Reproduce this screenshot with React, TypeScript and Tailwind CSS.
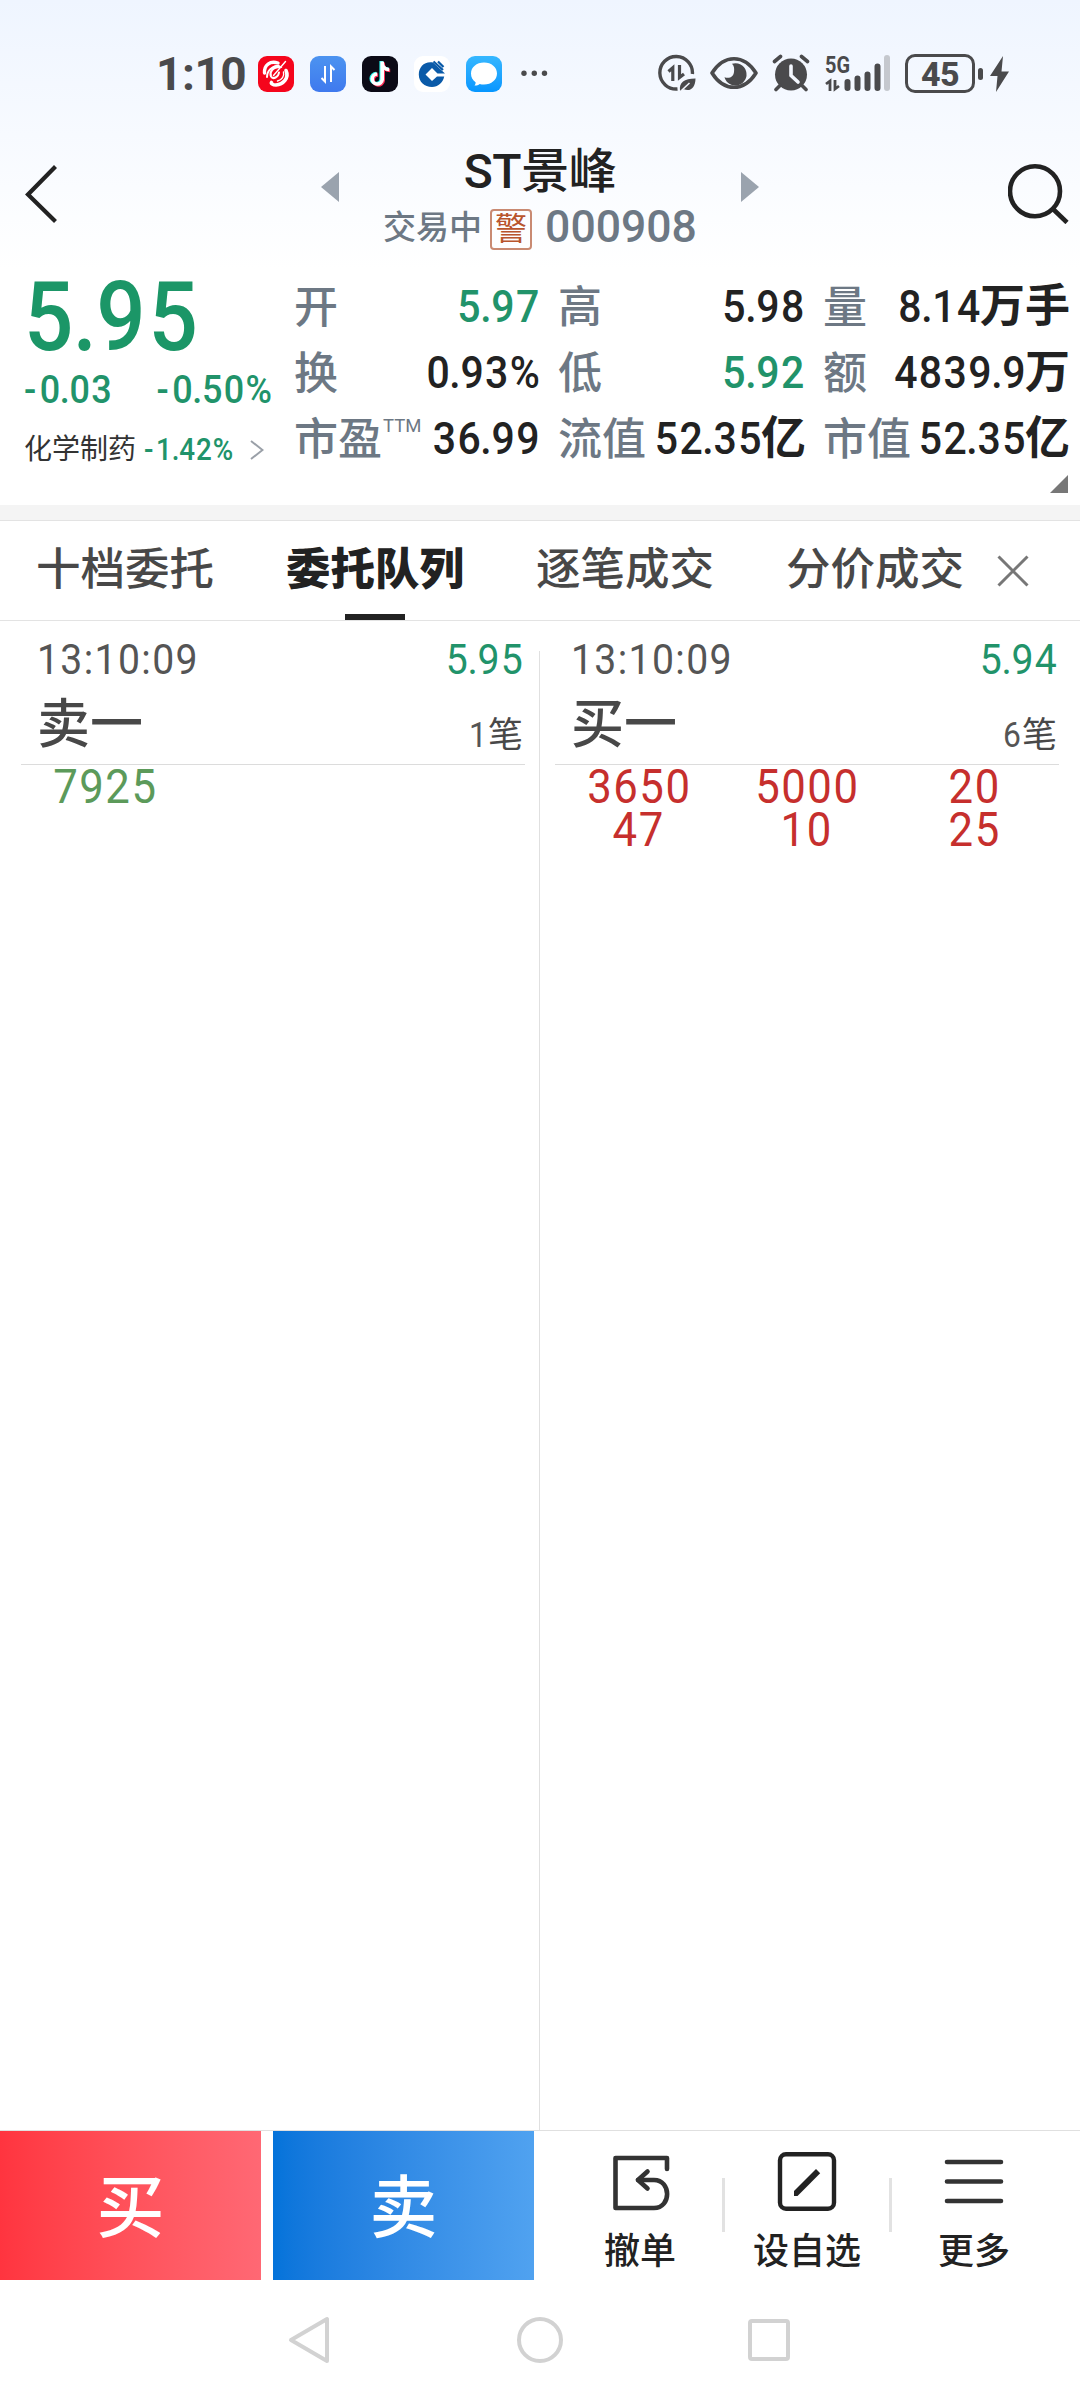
import { FC, ReactNode } from 'react';
import clsx from 'clsx';

type NumProps = { value: string; unit?: string; align?: 'left' | 'center' | 'right'; className?: string };

const ORIGINS = { left: 'origin-left', center: 'origin-center', right: 'origin-right' };

// narrow digits, the unit after them (万, 亿...) is heavier
const Num: FC<NumProps> = ({ value, unit, align = 'right', className }) => {
  const minus = value.startsWith('-');
  const [whole, decimals] = (minus ? value.slice(1) : value).split('.');
  return (
    <span className={clsx('flex whitespace-nowrap', className)}>
      <span className={clsx('inline-block scale-x-[0.91] tracking-[0.035em]', ORIGINS[align])}>
        {minus && <span className="mr-[0.06em]">-</span>}
        {whole}
        {decimals && (
          <>
            <span className="-mx-[0.043em]">.</span>
            {decimals}
          </>
        )}
      </span>
      {unit && <span className="-ml-0.5 font-bold">{unit}</span>}
    </span>
  );
};

const AppIcon: FC<{ className: string; children: ReactNode }> = ({ className, children }) => (
  <svg viewBox="0 0 36 36" className={clsx('size-9 rounded-[9px]', className)}>
    {children}
  </svg>
);

const StatusBar: FC = () => (
  <div className="flex h-[148px] items-start pt-[54px] pl-[156px] text-[#4a4a4c]">
    <div className="h-[38px] w-[102px] text-[46px] leading-[40px] font-bold tracking-[-0.01em]">1:10</div>
    <div className="mt-[2px] flex gap-4">
      <AppIcon className="bg-[#f5051c]">
        <g fill="none" stroke="#fff" strokeLinecap="round">
          <path d="M20 7C12 4.500 6 9 6.500 17" strokeWidth="3.400" />
          <path d="M9 21C9 12 19 8 22 11C15 11 11 16 13 20.500C15 24 20.500 21 21 16.500" strokeWidth="2" />
          <path d="M27.500 5.500L15.500 19.500" strokeWidth="1.400" />
          <path d="M28 14.500C31.500 22 25 28.500 18 29C14.500 29 13 27.500 13.500 26.500" strokeWidth="3.600" />
          <path d="M19.500 25C24 24 26.500 20 25.500 16" strokeWidth="1.400" />
        </g>
      </AppIcon>
      <AppIcon className="bg-linear-to-b from-[#4c93f0] to-[#3f79ee]">
        <path d="M15 10v15.500l-3.500-3.500M21 26V10.500l3.500 3.500" fill="none" stroke="#fff" strokeWidth="2" />
      </AppIcon>
      <AppIcon className="bg-[#0b0a16]">
        <g fill="none" strokeWidth="3.600">
          <path d="M19.200 5v18a5 5 0 1 1-5-5.500M19.200 7c.5 4 3.500 6 7 6" stroke="#25f4ee" />
          <path d="M21.200 6.500v18a5 5 0 1 1-5-5.500M21.200 8.500c.5 4 3.500 6 7 6" stroke="#fe2c55" />
          <path d="M20.200 5.500v18a5 5 0 1 1-5-5.500M20.200 7.500c.5 4 3.500 6 7 6" stroke="#fff" />
        </g>
      </AppIcon>
      <AppIcon className="bg-white">
        <path
          d="M19 6.500C10.500 5 4.800 11 4.800 18.500S10.500 31 18 31c6 0 11-4.500 12.200-10.500H23L18 25l-6.500-6.500L18 12l5.500 5.500H31L19 6.500z"
          fill="#0a5aa8"
        />
        <path d="M19.500 5.500l9.500 8.500M24 5.500l5.500 5.500" stroke="#0a5aa8" strokeWidth="2.200" />
      </AppIcon>
      <AppIcon className="bg-linear-to-b from-[#35b7ff] to-[#0596ff]">
        <path d="M18 6.500c7.500 0 13 4.700 13 11s-5.500 11-13 11c-1.500 0-3-.2-4.300-.6-1.500 1.200-3.400 1.800-5.200 1.600.8-.9 1.200-2 1.100-3.300C6.600 24.200 5 21.200 5 17.500c0-6.300 5.500-11 13-11z" fill="#fff" />
      </AppIcon>
    </div>
    <svg viewBox="0 0 28 38" className="ml-[19px] h-[38px] w-[28px] fill-current">
      <circle cx="3" cy="19.300" r="2.700" />
      <circle cx="13.300" cy="19.300" r="2.700" />
      <circle cx="23.500" cy="19.300" r="2.700" />
    </svg>

    {/* data saver */}
    <svg viewBox="0 0 38 38" className="ml-[109px] size-[38px]" fill="none" stroke="currentColor">
      <path d="M34.400 20A16.300 16.300 0 1 0 19.500 35" strokeWidth="3.400" />
      <path d="M10.500 17.500l4.300-3.700V27M21.500 11v12.500l4.500-3.500" strokeWidth="3.200" />
      <path d="M22 36.500c-1-8 4-12 15.500-12 0 9-5 13.500-11.500 10.800z" fill="currentColor" stroke="none" />
      <path d="M23.500 36.500l8-7.500" stroke="#f3f7fe" strokeWidth="1.600" />
    </svg>
    {/* eye comfort */}
    <svg viewBox="0 0 48 38" className="ml-[14px] h-[38px] w-[48px]">
      <path d="M2 19C8 9.500 15.500 4.700 24 4.700S40 9.500 46 19C40 28.500 32.500 33.300 24 33.300S8 28.500 2 19z" fill="none" stroke="currentColor" strokeWidth="3.600" strokeLinejoin="round" />
      <path d="M22 9.700a11.200 11.200 0 1 1-7.500 13.500c5 2 9-.7 9.500-5.200.4-3.500.3-6-2-8.300z" fill="currentColor" />
    </svg>
    {/* alarm */}
    <svg viewBox="0 0 38 38" className="ml-[14px] size-[38px]">
      <circle cx="19" cy="20.500" r="16" fill="currentColor" />
      <path d="M2.500 7.500l6-5M35.500 7.500l-6-5M8 31.500l-4 4M30 31.500l4 4" stroke="currentColor" strokeWidth="3.600" strokeLinecap="round" />
      <path d="M19 12v9.500l7 6.500" fill="none" stroke="#f3f7fe" strokeWidth="3.600" strokeLinecap="round" />
    </svg>
    <div className="ml-[15px] flex w-[66px] flex-col">
      <span className="h-[19px] origin-left scale-x-[0.83] text-[24px] leading-[22px] font-bold">5G</span>
      <svg viewBox="0 0 66 38" className="-mt-[19px] h-[38px] w-[66px]">
        <path d="M1 30l4-3v10M10 26v9l4-3" fill="none" stroke="currentColor" strokeWidth="2.800" />
        <path d="M22.500 28v6M32.500 24.500V34M42.500 20.500V34M52.500 12.500V34" stroke="currentColor" strokeWidth="6" strokeLinecap="round" />
        <path d="M62 4v30" stroke="#c5c8ce" strokeWidth="6" strokeLinecap="round" />
      </svg>
    </div>
    <div className="ml-[14px] flex items-center gap-[3px]">
      <div className="h-[39px] w-[70px] rounded-[10px] border-[3px] border-current text-center text-[34px] leading-[34px] font-extrabold tracking-[-0.02em]">
        45
      </div>
      <div className="h-3 w-[5px] rounded-full bg-current" />
      <svg viewBox="0 0 19 36" className="ml-[4px] h-9 w-[19px] fill-current">
        <path d="M13 0L0 20h7.500L6 36 19 15.500h-7.500z" />
      </svg>
    </div>
  </div>
);

const TitleBar: FC = () => (
  <div className="flex h-[122px] items-start pl-[25px]">
    <svg viewBox="0 0 34 58" className="mt-[17px] h-[58px] w-[34px]">
      <path d="M30.500 1.500L3 29.500 30.500 56.500" fill="none" stroke="#222" strokeWidth="4.200" />
    </svg>
    <div className="ml-[262px] flex w-[438px] items-start justify-between">
      <svg viewBox="0 0 18 30" className="mt-6 h-[30px] w-[18px]">
        <path d="M18 0v30L0 15z" fill="#9aa3ae" />
      </svg>
      <div className="flex flex-col items-center">
        <h1 className="h-[54px] text-[48px] leading-[47px] font-medium tracking-[-0.01em] text-[#222]">ST景峰</h1>
        <div className="flex h-[50px] items-center text-[#6d7884]">
          <span className="text-[33px] leading-[53px] font-medium">交易中</span>
          <span className="mt-1 ml-2 flex h-[41px] w-[42px] items-center justify-center rounded-[4px] border-2 border-[#c98a72] text-[32px] leading-[38px] text-[#b9552d]">
            警
          </span>
          <span className="ml-[13px] text-[44.5px] leading-[52px] font-medium">000908</span>
        </div>
      </div>
      <svg viewBox="0 0 18 30" className="mt-6 h-[30px] w-[18px]">
        <path d="M0 0v30l18-15z" fill="#9aa3ae" />
      </svg>
    </div>
    <svg viewBox="0 0 61 60" className="mt-4 ml-[249px] h-[60px] w-[61px]" fill="none" stroke="#222" strokeWidth="4.600">
      <circle cx="27" cy="27.300" r="25" />
      <path d="M45.500 45.500l13.500 13" />
    </svg>
  </div>
);

const QUOTES = [
  [
    { label: '开', value: '5.97', down: true },
    { label: '高', value: '5.98' },
    { label: '量', value: '8.14', unit: '万手' },
  ],
  [
    { label: '换', value: '0.93%' },
    { label: '低', value: '5.92', down: true },
    { label: '额', value: '4839.9', unit: '万' },
  ],
  [
    { label: '市盈', sup: 'TTM', value: '36.99' },
    { label: '流值', value: '52.35', unit: '亿' },
    { label: '市值', value: '52.35', unit: '亿' },
  ],
];

const QuotePanel: FC = () => (
  <div className="flex h-[235px] pl-6">
    <div className="flex w-[270px] flex-col text-[#21936a]">
      <Num
        value="5.95"
        align="left"
        className="mt-[-2px] h-[99px] text-[95.5px] leading-[98px] font-medium text-[#1b9667]"
      />
      <div className="flex h-[46px] items-center justify-between pr-[21px] text-[39.5px] leading-[46px] font-medium">
        <Num value="-0.03" align="left" />
        <Num value="-0.50%" />
      </div>
      <div className="mt-[12px] flex h-[50px] items-center">
        <span className="text-[28px] text-[#333]">化学制药</span>
        <Num value="-1.42%" align="left" className="ml-2 text-[30.5px] font-medium" />
        <svg viewBox="0 0 14 20" className="ml-[7px] h-5 w-[14px]">
          <path d="M1 1l11.500 9L1 19" fill="none" stroke="#9aa0a8" strokeWidth="2" />
        </svg>
      </div>
    </div>
    <div className="flex flex-1 flex-col pt-1">
      {QUOTES.map((row, i) => (
        <div key={i} className="grid h-[66px] grid-cols-[245px_246px_245px] gap-x-[19px]">
          {row.map(({ label, sup, value, unit, down }) => (
            <div key={label} className="flex items-center justify-between leading-[66px]">
              <span className="-mr-5 flex pt-px text-[44px] font-medium whitespace-nowrap text-[#6d7884]">
                {label}
                {sup && <span className="-mt-[14px] ml-px text-[18.5px] font-normal">{sup}</span>}
              </span>
              <Num
                value={value}
                unit={unit}
                className={clsx('-mt-[2px] -mr-[2px] text-[45px] font-medium', down ? 'text-[#21936a]' : 'text-[#222]')}
              />
            </div>
          ))}
        </div>
      ))}
      <svg viewBox="0 0 18 18" className="mt-[3px] mr-3 size-[18px] self-end">
        <path d="M18 0v18H0z" fill="#777" />
      </svg>
    </div>
  </div>
);

const TABS = ['十档委托', '委托队列', '逐笔成交', '分价成交'];

const Tabs: FC = () => (
  <div className="flex h-[101px] items-start border-y border-[#e3e3e3] pl-[36px]">
    <div className="flex gap-[72px]">
      {TABS.map((tab) => {
        const active = tab === '委托队列';
        return (
          <div key={tab} className="flex h-[99px] w-[178px] flex-col items-center justify-between">
            <span
              className={clsx(
                'h-[93px] text-[44.5px] leading-[98px] whitespace-nowrap',
                active ? 'font-black text-[#222]' : 'font-medium text-[#484848]'
              )}
            >
              {tab}
            </span>
            {active && <div className="h-[6px] w-[60px] shrink-0 bg-[#222]" />}
          </div>
        );
      })}
    </div>
    <svg viewBox="0 0 32 32" className="mt-[34px] ml-[33px] size-8">
      <path d="M1.500 1.500l29 29M30.500 1.500l-29 29" stroke="#777" strokeWidth="3" />
    </svg>
  </div>
);

const QUEUES = [
  { name: '卖一', price: '5.95', count: '1', orders: ['7925'], color: 'text-[#5c9a5a]', box: 'ml-[21px]' },
  {
    name: '买一',
    price: '5.94',
    count: '6',
    orders: ['3650', '5000', '20', '47', '10', '25'],
    color: 'text-[#c62f2d]',
    box: 'ml-[15px]',
  },
];

const OrderQueue: FC = () => (
  <div className="grid h-[1509px] grid-cols-2">
    {QUEUES.map(({ name, price, count, orders, color, box }, i) => (
      <div key={name} className="relative flex flex-col">
        {i === 0 && <div className="absolute top-[30px] right-0 bottom-0 w-px bg-[#e0e0e0]" />}
        <div className={clsx('flex w-[504px] flex-col border-b border-[#dcdcdc] pr-[2px] pl-4', box)}>
          <div className="flex h-[76px] items-center justify-between text-[42px]">
            <Num value="13:10:09" align="left" className="text-[43px] text-[#555]" />
            <Num value={price} className="-mr-px text-[43px] text-[#21936a]" />
          </div>
          <div className="flex h-[67px] items-start justify-between text-[#484848]">
            <span className="text-[53px] leading-[56px] font-medium">{name}</span>
            <span className="flex text-[35px] leading-[77px]">
              <Num value={count} className="text-[#555]" />笔
            </span>
          </div>
        </div>
        <div className={clsx('grid w-[504px] grid-cols-3 text-[48px] leading-[43px]', box, color)}>
          {orders.map((order, k) => (
            <Num key={k} value={order} align="center" className="justify-center" />
          ))}
        </div>
      </div>
    ))}
  </div>
);

const Action: FC<{ label: string; children: ReactNode }> = ({ label, children }) => (
  <div className="flex flex-1 flex-col items-center pt-5">
    {children}
    <span className="mt-[11px] text-[36px] leading-[60px] font-medium text-[#222]">{label}</span>
  </div>
);

const BottomBar: FC = () => (
  <div className="flex h-[150px] border-t border-[#e0e0e0]">
    <button className="h-[149px] w-[261px] bg-linear-to-r from-[#ff343f] to-[#ff6874] pt-1.5 text-[68px] font-medium text-white">
      买
    </button>
    <button className="ml-3 h-[149px] w-[261px] bg-linear-to-r from-[#0473da] to-[#50a2f0] pt-1.5 text-[68px] font-medium text-white">
      卖
    </button>
    <div className="mx-6 flex flex-1 items-start">
      <Action label="撤单">
        <svg viewBox="0 0 60 60" className="size-[60px]" fill="none" stroke="#333" strokeWidth="4.600" strokeLinecap="round" strokeLinejoin="round">
          <path d="M57 18V7H5.500v50H44c17.500 0 17.500-28 0-28H28" />
          <path d="M37.500 20.500L28 29l9.500 8.500" />
        </svg>
      </Action>
      <div className="mt-[47px] h-[54px] w-[3px] bg-[#e2e2e2]" />
      <Action label="设自选">
        <svg viewBox="0 0 60 60" className="size-[60px]" stroke="#222">
          <rect x="3" y="3.200" width="54" height="54.500" rx="6" fill="none" strokeWidth="4.400" />
          <path d="M17 45v-5l22-22 4.200 4.200L20.500 45z" fill="#222" stroke="none" />
        </svg>
      </Action>
      <div className="mt-[47px] h-[54px] w-[3px] bg-[#e2e2e2]" />
      <Action label="更多">
        <svg viewBox="0 0 60 60" className="size-[60px]" stroke="#333" strokeWidth="4.600" strokeLinecap="round">
          <path d="M3 11h54M3 30.500h54M3 50h54" />
        </svg>
      </Action>
    </div>
  </div>
);

const NavBar: FC = () => (
  <div className="flex h-[120px] items-center justify-center gap-[185px]">
    <svg viewBox="0 0 42 50" className="h-[50px] w-[42px] overflow-visible" fill="none" stroke="#d2d2d2" strokeWidth="4" strokeLinejoin="round">
      <path d="M37 4v42L1 25z" />
    </svg>
    <div className="size-[46px] rounded-full border-4 border-[#d2d2d2]" />
    <div className="size-[42px] rounded-[4px] border-4 border-[#d2d2d2]" />
  </div>
);

const App: FC = () => (
  <div className="flex h-[2400px] w-[1080px] flex-col overflow-hidden bg-white font-[family-name:Roboto,'Noto_Sans_CJK_SC',sans-serif]">
    <div className="bg-linear-to-b from-[#eff5ff] to-white">
      <StatusBar />
      <TitleBar />
    </div>
    <QuotePanel />
    <div className="h-[15px] bg-[#f4f4f4]" />
    <Tabs />
    <OrderQueue />
    <BottomBar />
    <NavBar />
  </div>
);

export default App;
